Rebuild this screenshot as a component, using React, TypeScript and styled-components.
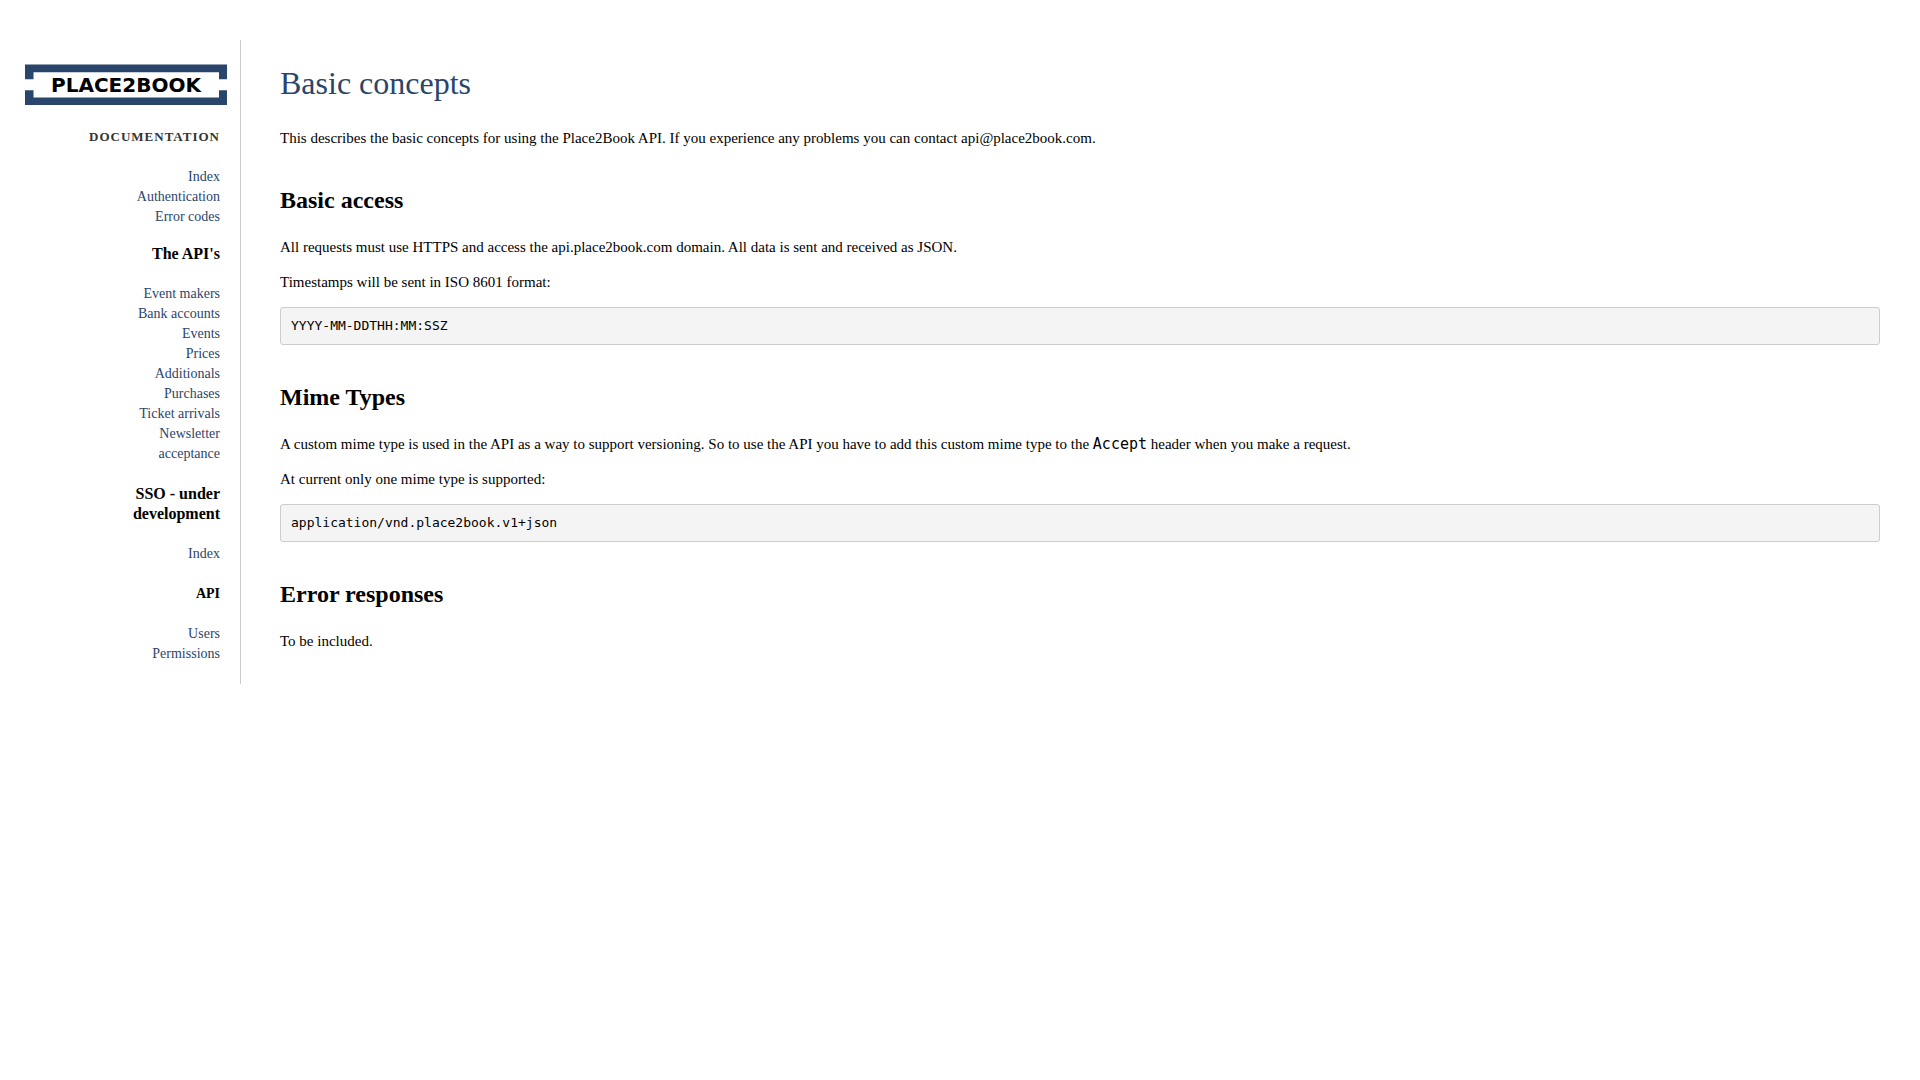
import React from "react";
import styled, { createGlobalStyle } from "styled-components";

const navy = "#2a456b";
const serif = `"Liberation Serif", "Times New Roman", serif`;
const mono = `"DejaVu Sans Mono", monospace`;

const GlobalStyle = createGlobalStyle`
  body {
    margin: 0;
    background: #fff;
    color: #000;
    font-family: ${serif};
    font-size: 15px;
    line-height: 20px;
  }
`;

const Page = styled.div`
  display: flex;
  align-items: flex-start;
  padding: 40px 40px 40px 0;
`;

const Sidebar = styled.nav`
  flex: none;
  display: flex;
  flex-direction: column;
  align-items: flex-end;
  gap: 20px;
  box-sizing: border-box;
  width: 241px;
  padding: 24px 20px 20px;
  border-right: 1px solid #ccc;
  font-size: 14px;
  text-align: right;
`;

const LogoLink = styled.a`
  display: block;
  width: 202px;
  margin: 0 -7px 2px 0;

  svg {
    display: block;
    width: 100%;
  }
`;

const NavTitle = styled.h5`
  margin: 0;
  color: #333;
  font-size: 13px;
  letter-spacing: 1px;
  text-transform: uppercase;
`;

const NavHeading = styled.h3<{ $tight?: boolean }>`
  width: 120px;
  margin: ${(p) => (p.$tight ? "-3px" : "0")} 0 0;
  font-size: 16px;
`;

const NavSubheading = styled.h4`
  margin: 0;
  font-size: 14px;
`;

const NavList = styled.ul`
  width: 120px;
  margin: 0;
  padding: 0;
  list-style: none;
`;

const NavLink = styled.a`
  color: ${navy};
  text-decoration: none;
`;

const Content = styled.main`
  flex: 1;
  min-width: 0;
  padding: 23px 0 0 39px;
`;

const Title = styled.h1`
  margin: 0 0 25px;
  color: ${navy};
  font-size: 32px;
  font-weight: normal;
  line-height: 40px;
`;

const Heading = styled.h2`
  margin: 40px 0 25px;
  font-size: 24px;
  line-height: 24px;
`;

const Text = styled.p`
  margin: 0 0 15px;
`;

const InlineCode = styled.code`
  font-family: ${mono};
  font-size: 15px;
  line-height: 16px;
`;

const CodeBlock = styled.pre`
  margin: 0;
  padding: 10px;
  border: 1px solid #ccc;
  border-radius: 3px;
  background: #f4f4f4;
  font-family: ${mono};
  font-size: 13px;
  line-height: 16px;
`;

function Logo() {
  return (
    <svg viewBox="0 0 202 41" role="img" aria-label="Place2Book">
      <path
        fill="#2a456b"
        d="M0 .5H202V15.3H194V8.3H8.5V15.3H0ZM0 26.3H8.5V33.4H194V26.3H202V41H0Z"
      />
      <text
        x="101"
        y="28"
        textAnchor="middle"
        fontFamily="'DejaVu Sans', sans-serif"
        fontWeight="bold"
        fontSize="20"
      >
        PLACE2BOOK
      </text>
    </svg>
  );
}

function Links({ items }: { items: string[] }) {
  return (
    <NavList>
      {items.map((item) => (
        <li key={item}>
          <NavLink href="#">{item}</NavLink>
        </li>
      ))}
    </NavList>
  );
}

export default function App() {
  return (
    <>
      <GlobalStyle />
      <Page>
        <Sidebar>
          <LogoLink href="#">
            <Logo />
          </LogoLink>
          <NavTitle>Documentation</NavTitle>
          <Links items={["Index", "Authentication", "Error codes"]} />
          <NavHeading $tight>The API's</NavHeading>
          <Links
            items={[
              "Event makers",
              "Bank accounts",
              "Events",
              "Prices",
              "Additionals",
              "Purchases",
              "Ticket arrivals",
              "Newsletter acceptance",
            ]}
          />
          <NavHeading>SSO - under development</NavHeading>
          <Links items={["Index"]} />
          <NavSubheading>API</NavSubheading>
          <Links items={["Users", "Permissions"]} />
        </Sidebar>
        <Content>
          <Title>Basic concepts</Title>
          <Text>
            This describes the basic concepts for using the Place2Book API. If you experience any
            problems you can contact api@place2book.com.
          </Text>

          <Heading>Basic access</Heading>
          <Text>
            All requests must use HTTPS and access the api.place2book.com domain. All data is sent
            and received as JSON.
          </Text>
          <Text>Timestamps will be sent in ISO 8601 format:</Text>
          <CodeBlock>YYYY-MM-DDTHH:MM:SSZ</CodeBlock>

          <Heading>Mime Types</Heading>
          <Text>
            A custom mime type is used in the API as a way to support versioning. So to use the API
            you have to add this custom mime type to the <InlineCode>Accept</InlineCode> header when
            you make a request.
          </Text>
          <Text>At current only one mime type is supported:</Text>
          <CodeBlock>application/vnd.place2book.v1+json</CodeBlock>

          <Heading>Error responses</Heading>
          <Text>To be included.</Text>
        </Content>
      </Page>
    </>
  );
}
